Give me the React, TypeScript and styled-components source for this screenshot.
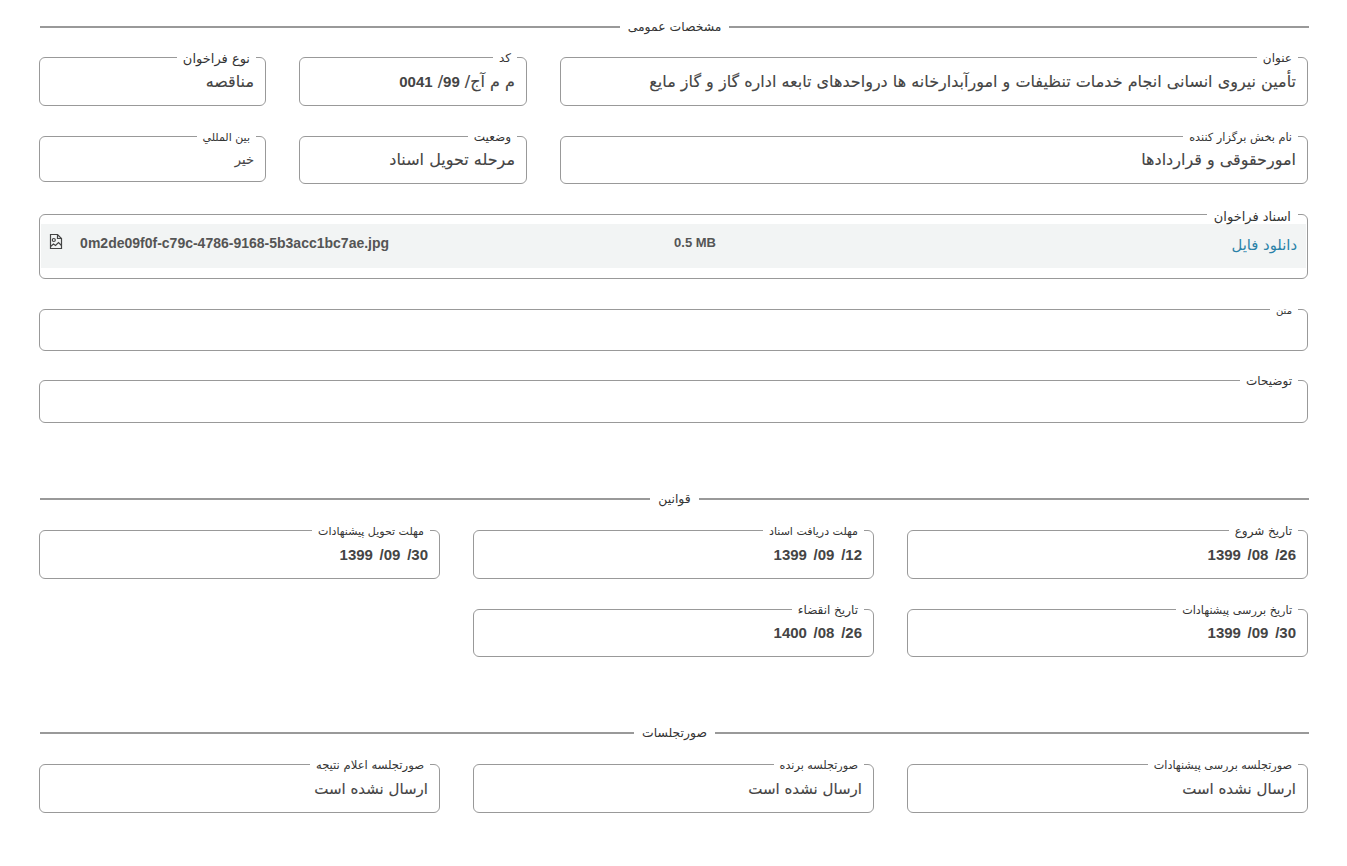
import type { FC, ReactNode } from 'react';
import styled, { createGlobalStyle } from 'styled-components';

const GlobalStyle = createGlobalStyle`
	html, body {
		margin: 0;
		padding: 0;
		background: #fff;
	}
	body {
		font-family: "DejaVu Sans", sans-serif;
		color: #333;
	}
`;

type FieldProps = {
	label: string;
	value?: ReactNode;
	height: number;
	labelSize?: number;
	valueSize?: number;
	digits?: boolean;
};

const Field: FC<FieldProps> = ({ label, value, height, labelSize = 12, valueSize = 16, digits }) => (
	<FieldBox $height={height}>
		<FieldLabel $size={labelSize}>{label}</FieldLabel>
		{value && (
			<FieldValue $size={valueSize} $digits={digits} $top={height >= 56 ? 7 : 6}>
				{value}
			</FieldValue>
		)}
	</FieldBox>
);

const Section: FC<{ title: string; $top: number; children: ReactNode }> = ({ title, $top, children }) => (
	<SectionBox $top={$top}>
		<SectionTitle>
			<span>{title}</span>
		</SectionTitle>
		{children}
	</SectionBox>
);

const FileIcon: FC = () => (
	<svg width="14" height="17" viewBox="0 0 14 17" fill="none" stroke="#444" strokeWidth="1.2">
		<path d="M1.5 1.5h7l4 4v10h-11z" />
		<path d="M8.5 1.5v4h4" />
		<circle cx="4.8" cy="7" r="1.5" />
		<path d="M1.5 13.5l3-2.5 2 1.5 3-3 3 3" />
	</svg>
);

export const App: FC = () => (
	<>
		<GlobalStyle />
		<Page dir="rtl">
			<Section title="مشخصات عمومی" $top={18}>
				<Row $columns="748px 228px 227px" $top={14}>
					<Field
						height={56}
						label="عنوان"
						value="تأمین نیروی انسانی انجام خدمات تنظیفات و امورآبدارخانه ها درواحدهای تابعه اداره گاز و گاز مایع"
					/>
					<Field
						height={56}
						label="کد"
						value={
							<>
								م م آج/ <Digits>99</Digits>/ <Digits>0041</Digits>
							</>
						}
					/>
					<Field height={56} label="نوع فراخوان" labelSize={13} value="مناقصه" />
				</Row>
				<Row $columns="748px 228px 227px" $top={23}>
					<Field height={55} label="نام بخش برگزار کننده" labelSize={11.3} value="امورحقوقی و قراردادها" />
					<Field height={55} label="وضعیت" value="مرحله تحویل اسناد" />
					<Field height={53} label="بين المللي" labelSize={11} valueSize={13} value="خیر" />
				</Row>
				<FileBox>
					<FileLabel $size={13}>اسناد فراخوان</FileLabel>
					<FileRow>
						<DownloadLink>دانلود فایل</DownloadLink>
						<FileSize>0.5 MB</FileSize>
						<FileName>0m2de09f0f-c79c-4786-9168-5b3acc1bc7ae.jpg</FileName>
						<FileIconSlot>
							<FileIcon />
						</FileIconSlot>
					</FileRow>
				</FileBox>
				<WideField $top={23}>
					<Field height={49} label="متن" labelSize={10} />
				</WideField>
				<WideField $top={22}>
					<Field height={50} label="توضیحات" />
				</WideField>
			</Section>
			<Section title="قوانین" $top={67}>
				<Row $columns="repeat(3, 401px)" $top={15}>
					<Field height={56} label="تاریخ شروع" digits value="26/ 08/ 1399" />
					<Field height={56} label="مهلت دریافت اسناد" labelSize={11} digits value="12/ 09/ 1399" />
					<Field height={56} label="مهلت تحویل پیشنهادات" labelSize={11} digits value="30/ 09/ 1399" />
				</Row>
				<Row $columns="repeat(3, 401px)" $top={23}>
					<Field height={55} label="تاریخ بررسی پیشنهادات" labelSize={11.2} digits value="30/ 09/ 1399" />
					<Field height={55} label="تاریخ انقضاء" digits value="26/ 08/ 1400" />
				</Row>
			</Section>
			<Section title="صورتجلسات" $top={67}>
				<Row $columns="repeat(3, 401px)" $top={15}>
					<Field height={56} label="صورتجلسه بررسی پیشنهادات" labelSize={11.2} valueSize={15} value="ارسال نشده است" />
					<Field height={56} label="صورتجلسه برنده" labelSize={11.2} valueSize={15} value="ارسال نشده است" />
					<Field height={56} label="صورتجلسه اعلام نتیجه" labelSize={11.6} valueSize={15} value="ارسال نشده است" />
				</Row>
			</Section>
		</Page>
	</>
);

export default App;

const Page = styled.div`
	width: 1269px;
	margin-left: 39px;
	padding-bottom: 40px;
	font-size: 12px;
`;

const SectionBox = styled.section<{ $top: number }>`
	padding-top: ${p => p.$top}px;
`;

const SectionTitle = styled.div`
	display: flex;
	align-items: center;
	height: 18px;
	margin-left: 1px;
	margin-right: -1px;
	font-size: 12.4px;
	color: #333;

	&::before,
	&::after {
		content: '';
		flex: 1;
		height: 2px;
		background: #999;
	}

	span {
		padding: 0 8px 1px;
	}
`;

const Row = styled.div<{ $columns: string; $top: number }>`
	display: grid;
	grid-template-columns: ${p => p.$columns};
	column-gap: 33px;
	align-items: start;
	margin-top: ${p => p.$top}px;
`;

const FieldBox = styled.fieldset<{ $height: number }>`
	box-sizing: border-box;
	height: ${p => p.$height}px;
	margin: 0;
	padding: 0 11px;
	min-width: 0;
	border: 1px solid #999;
	border-radius: 6px;
`;

const FieldLabel = styled.legend<{ $size: number }>`
	margin-right: -2px;
	padding: 0 6px;
	line-height: 15px;
	font-size: ${p => p.$size}px;
	color: #333;
	transform: translateY(1px);
`;

const FieldValue = styled.div<{ $size: number; $digits?: boolean; $top: number }>`
	margin-top: ${p => p.$top}px;
	line-height: 20px;
	font-size: ${p => (p.$digits ? 15 : p.$size)}px;
	font-weight: ${p => (p.$digits ? 700 : 400)};
	font-family: ${p => (p.$digits ? '"Liberation Sans", sans-serif' : 'inherit')};
	word-spacing: ${p => (p.$digits ? 2.5 : 0)}px;
	color: #444;
	white-space: nowrap;
	-webkit-text-stroke: ${p => (p.$digits ? 0 : 0.12)}px #444;
`;

const Digits = styled.span`
	font-family: "Liberation Sans", sans-serif;
	font-size: 15px;
	font-weight: 700;
	-webkit-text-stroke: 0;
`;

const FileBox = styled.fieldset`
	box-sizing: border-box;
	height: 72px;
	margin: 23px 0 0;
	padding: 0 1px;
	border: 1px solid #999;
	border-radius: 6px;
`;

const FileLabel = styled(FieldLabel)`
	margin-right: 8px;
	padding: 0 7px;
	transform: translateY(2px);
`;

const FileRow = styled.div`
	display: flex;
	align-items: flex-start;
	height: 44px;
	margin-top: 2px;
	background: #f2f4f4;
`;

const DownloadLink = styled.a`
	width: 590px;
	padding: 12px 9px 0 0;
	box-sizing: border-box;
	font-size: 14.8px;
	line-height: 18px;
	color: #2a82a8;
`;

const FileSize = styled.span`
	margin-top: 11px;
	unicode-bidi: plaintext;
	font-family: "Liberation Sans", sans-serif;
	font-size: 13px;
	font-weight: 700;
	line-height: 16px;
	color: #555;
`;

const FileName = styled.span`
	margin-right: 285px;
	margin-top: 11px;
	unicode-bidi: plaintext;
	font-family: "Liberation Sans", sans-serif;
	font-size: 14px;
	font-weight: 700;
	line-height: 16px;
	color: #555;
	white-space: nowrap;
`;

const FileIconSlot = styled.span`
	display: flex;
	margin-right: 17px;
	margin-top: 9px;
`;

const WideField = styled.div<{ $top: number }>`
	margin-top: ${p => p.$top}px;
`;
